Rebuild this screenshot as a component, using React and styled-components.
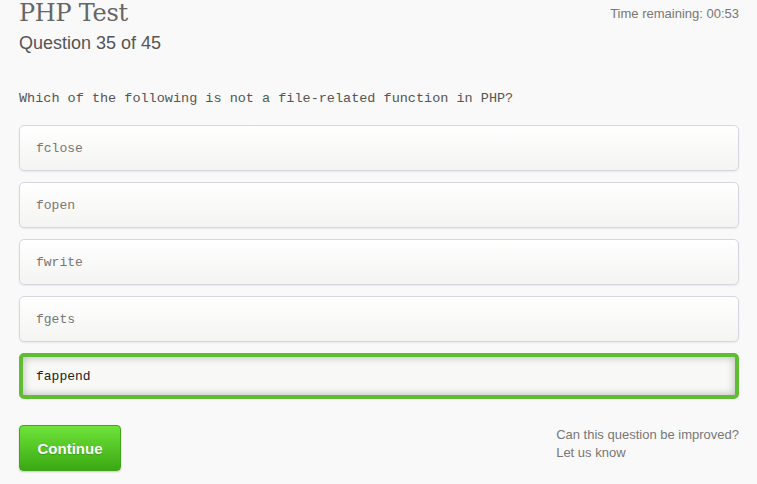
import styled, { createGlobalStyle } from "styled-components";

const GlobalStyle = createGlobalStyle`
  html, body {
    margin: 0;
    padding: 0;
    background: #f9f9f9;
  }
`;

const options = ["fclose", "fopen", "fwrite", "fgets", "fappend"];
const selected = 4;

const App = () => {
    return (
        <Page>
            <GlobalStyle />
            <Header>
                <div>
                    <Title>PHP Test</Title>
                    <Progress>Question 35 of 45</Progress>
                </div>
                <Timer>Time remaining: 00:53</Timer>
            </Header>
            <Question>Which of the following is not a file-related function in PHP?</Question>
            <Options>
                {options.map((o, i) => (
                    <Option key={o} $selected={i === selected}>{o}</Option>
                ))}
            </Options>
            <Footer>
                <ContinueButton>Continue</ContinueButton>
                <Feedback>
                    Can this question be improved?
                    <br />
                    Let us know
                </Feedback>
            </Footer>
        </Page>
    );
};

const Page = styled.div`
    padding: 0 18px 0 19px;
    min-height: 484px;
    box-sizing: border-box;
    background: #f9f9f9;
`;

const Header = styled.div`
    display: flex;
    justify-content: space-between;
    align-items: flex-start;
`;

const Title = styled.h1`
    margin: 0;
    font-family: "DejaVu Serif", serif;
    font-weight: normal;
    font-size: 24px;
    line-height: 26px;
    color: #666;
    letter-spacing: -0.3px;
`;

const Progress = styled.h2`
    margin: 6px 0 0;
    font-family: "Liberation Sans", Arial, sans-serif;
    font-weight: normal;
    font-size: 18px;
    line-height: 22px;
    color: #555;
`;

const Timer = styled.div`
    margin-top: 6px;
    font-family: "Liberation Sans", Arial, sans-serif;
    font-size: 13px;
    color: #777;
`;

const Question = styled.p`
    margin: 37px 0 0;
    font-family: "Liberation Mono", "Courier New", monospace;
    font-size: 13.5px;
    line-height: 16px;
    color: #555;
`;

const Options = styled.div`
    margin-top: 18px;
    display: flex;
    flex-direction: column;
    gap: 11px;
`;

const Option = styled.div`
    height: 46px;
    box-sizing: border-box;
    display: flex;
    align-items: center;
    padding-left: ${p => (p.$selected ? "13px" : "16px")};
    border: ${p => (p.$selected ? "4px solid #5ebd32" : "1px solid #d6d6e0")};
    border-radius: 5px;
    background: ${p => (p.$selected ? "#f8f8f6" : "linear-gradient(#ffffff, #f4f4f2)")};
    box-shadow: ${p => (p.$selected
        ? "inset 0 0 8px rgba(0, 0, 0, 0.28)"
        : "0 1px 2px rgba(0, 0, 0, 0.07)")};
    font-family: "Liberation Mono", "Courier New", monospace;
    font-size: 13px;
    color: ${p => (p.$selected ? "#222" : "#777")};
`;

const Footer = styled.div`
    margin-top: 26px;
    display: flex;
    justify-content: space-between;
    align-items: flex-start;
`;

const ContinueButton = styled.button`
    width: 102px;
    height: 46px;
    border: 1px solid #41a51c;
    border-radius: 4px;
    background: linear-gradient(#6fe33a, #3aa912);
    box-shadow: 0 1px 2px rgba(0, 0, 0, 0.2);
    color: #fff;
    font-family: "Liberation Sans", Arial, sans-serif;
    font-weight: bold;
    font-size: 15px;
    text-shadow: 0 1px 1px rgba(0, 0, 0, 0.2);
    cursor: pointer;
`;

const Feedback = styled.div`
    margin-top: 1px;
    font-family: "Liberation Sans", Arial, sans-serif;
    font-size: 13px;
    line-height: 18px;
    color: #777;
`;

export default App;
